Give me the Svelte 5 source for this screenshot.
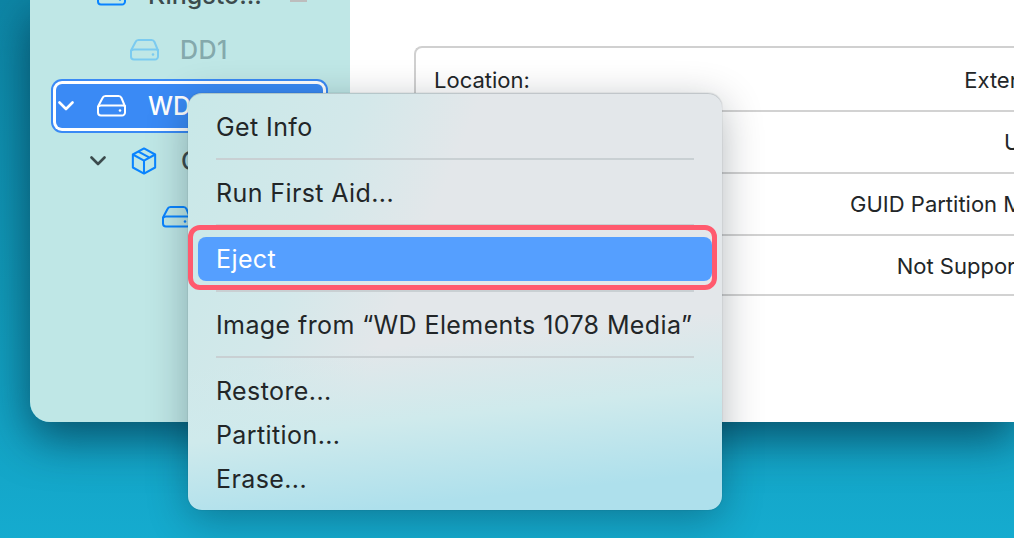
<script lang="ts">
  const info = [
    { label: 'Location:', value: 'External' },
    { label: 'Connection:', value: 'USB' },
    { label: 'Partition Map:', value: 'GUID Partition Map' },
    { label: 'SMART status:', value: 'Not Supported' }
  ];
</script>

{#snippet disk()}
  <svg class="disk" viewBox="0 0 30 24" fill="none" stroke="currentColor" stroke-width="2">
    <path d="M8.500 2h13c1.500 0 2.500.8 3 2l3.500 8.500V18.500a3 3 0 0 1-3 3H4a3 3 0 0 1-3-3v-6L5.500 4c.5-1.200 1.500-2 3-2z" />
    <path d="M1.500 12.500c.8-.8 1.500-1 2.500-1h22c1 0 1.700.2 2.500 1" />
    <circle cx="23" cy="16.500" r="1.300" fill="currentColor" stroke="none" />
  </svg>
{/snippet}

{#snippet chevron()}
  <svg class="chevron" viewBox="0 0 16 10" fill="none" stroke="currentColor" stroke-width="2.600" stroke-linecap="round" stroke-linejoin="round">
    <path d="M1.500 1.500 8 8l6.500-6.500" />
  </svg>
{/snippet}

<div class="desktop">
  <div class="window">
    <aside class="sidebar">
      <div class="row depth-0">
        {@render chevron()}
        <span class="icon-blue">{@render disk()}</span>
        <span class="name">Kingsto...</span>
        <span class="eject"></span>
      </div>
      <div class="row depth-2-dim dim">
        <span>{@render disk()}</span>
        <span class="name">DD1</span>
      </div>
      <div class="row depth-0 selected">
        {@render chevron()}
        {@render disk()}
        <span class="name">WD Elements</span>
      </div>
      <div class="row depth-1">
        {@render chevron()}
        <svg class="box" viewBox="0 0 28 30" fill="none" stroke="currentColor" stroke-width="2.200" stroke-linejoin="round">
          <path d="M14 1.500 26 8v14l-12 6.500L2 22V8z" />
          <path d="M2 8l12 6.500L26 8M14 14.500v14M8 4.800l12 6.500" />
        </svg>
        <span class="name">Container disk3</span>
      </div>
      <div class="row depth-2">
        <span class="icon-blue">{@render disk()}</span>
        <span class="name">Untitled</span>
      </div>
    </aside>

    <main class="main">
      <div class="table">
        {#each info as item}
          <div class="info-row">
            <span>{item.label}</span>
            <span>{item.value}</span>
          </div>
        {/each}
      </div>
    </main>
  </div>

  <div class="menu">
    <div class="item">Get Info</div>
    <div class="sep"></div>
    <div class="item">Run First Aid...</div>
    <div class="sep"></div>
    <div class="item active">Eject</div>
    <div class="sep"></div>
    <div class="item">Image from “WD Elements 1078 Media”</div>
    <div class="sep"></div>
    <div class="item">Restore...</div>
    <div class="item">Partition...</div>
    <div class="item">Erase...</div>
  </div>
</div>

<style>
  :global(body) {
    overflow: hidden;
  }

  .desktop {
    position: relative;
    width: 1014px;
    height: 538px;
    overflow: hidden;
    background: linear-gradient(180deg, #0d86a6 0%, #119ab9 55%, #15abcf 100%);
    font-family: Inter, "Liberation Sans", sans-serif;
    color: #222628;
  }

  .window {
    display: flex;
    height: 422px;
    margin-left: 30px;
    border-bottom-left-radius: 20px;
    box-shadow: 0 16px 46px rgba(0, 30, 50, 0.62);
  }

  .sidebar {
    flex: 0 0 320px;
    box-sizing: border-box;
    display: flex;
    flex-direction: column;
    gap: 12px;
    height: 422px;
    padding: 0 27px 0 26px;
    overflow: hidden;
    background: #bfe7e6;
    border-bottom-left-radius: 20px;
    font-size: 25px;
    font-weight: 500;
    color: #3c4b4d;
  }

  .row {
    flex: 0 0 43.500px;
    display: flex;
    align-items: center;
    border-radius: 6px;
    white-space: nowrap;
  }

  .row:first-child {
    margin-top: -27px;
  }

  .depth-0 {
    padding-left: 2px;
  }

  .depth-1 {
    padding-left: 34px;
  }

  .depth-2 {
    padding-left: 106px;
  }

  .depth-2-dim {
    padding-left: 74px;
  }

  .chevron {
    flex: none;
    width: 16px;
    height: 10px;
    margin-right: 23px;
  }

  .depth-1 .chevron {
    margin-right: 25px;
  }

  .disk {
    display: block;
    flex: none;
    width: 30px;
    height: 24px;
  }

  .box {
    flex: none;
    width: 26px;
    height: 28px;
    margin-right: 24px;
    color: #0a84ff;
  }

  .icon-blue {
    color: #0a84ff;
  }

  .name {
    margin-left: 21px;
  }

  .depth-1 .name {
    margin-left: 0;
  }

  .depth-2-dim .name {
    margin-left: 20px;
    letter-spacing: 0.5px;
  }

  .dim {
    color: #84a9ac;
  }

  .dim span:first-child {
    color: #7ccbf0;
  }

  .selected {
    background: #3a8af5;
    color: #fff;
    box-shadow: 0 0 0 3px #fff, 0 0 0 5px #3a8af5;
  }

  .eject {
    width: 17px;
    height: 4px;
    margin-left: auto;
    margin-right: 16px;
    margin-top: 11px;
    background: #bdbdbd;
  }

  .main {
    flex: 1;
    min-width: 0;
    padding: 46px 0 0 64px;
    background: #fff;
    overflow: hidden;
    font-size: 22px;
  }

  .table {
    width: 653px;
    border-top: 2px solid #d0d0d0;
    border-left: 2px solid #d0d0d0;
    border-top-left-radius: 8px;
  }

  .info-row {
    display: flex;
    justify-content: space-between;
    box-sizing: border-box;
    height: 62px;
    padding: 17px 20px 0 18px;
    border-bottom: 2px solid #d2d2d2;
    white-space: nowrap;
  }

  .info-row:first-child {
    height: 64px;
    padding-top: 19px;
  }

  .info-row:last-child {
    height: 60px;
  }

  .menu {
    position: absolute;
    left: 188px;
    top: 93px;
    box-sizing: border-box;
    width: 534px;
    height: 417px;
    padding-top: 12px;
    border-radius: 14px;
    background:
      linear-gradient(174deg, rgba(172, 224, 236, 0) 58%, #cfeaec 74%, #aee0ec 92%),
      linear-gradient(112deg, #c8e8e8 0%, #d3e8ea 25%, #e3e7ea 42%);
    box-shadow: inset 0 1px 0 rgba(60, 70, 75, 0.2), 0 0 1px 0 rgba(30, 40, 45, 0.5), 0 10px 40px rgba(0, 20, 30, 0.3);
    font-size: 25px;
    letter-spacing: 0.4px;
  }

  .item {
    position: relative;
    box-sizing: border-box;
    height: 44px;
    margin: 0 10px;
    padding: 0 18px;
    display: flex;
    align-items: center;
    border-radius: 8px;
    white-space: nowrap;
  }

  .active {
    background: #559fff;
    color: #fff;
  }

  .active::after {
    content: '';
    position: absolute;
    left: -10px;
    right: -5px;
    top: -12px;
    bottom: -9px;
    border: 5px solid #ff5a6e;
    border-radius: 12px;
  }

  .sep {
    height: 2px;
    margin: 9px 28px 11px;
    background: #c9d0d3;
  }
</style>
